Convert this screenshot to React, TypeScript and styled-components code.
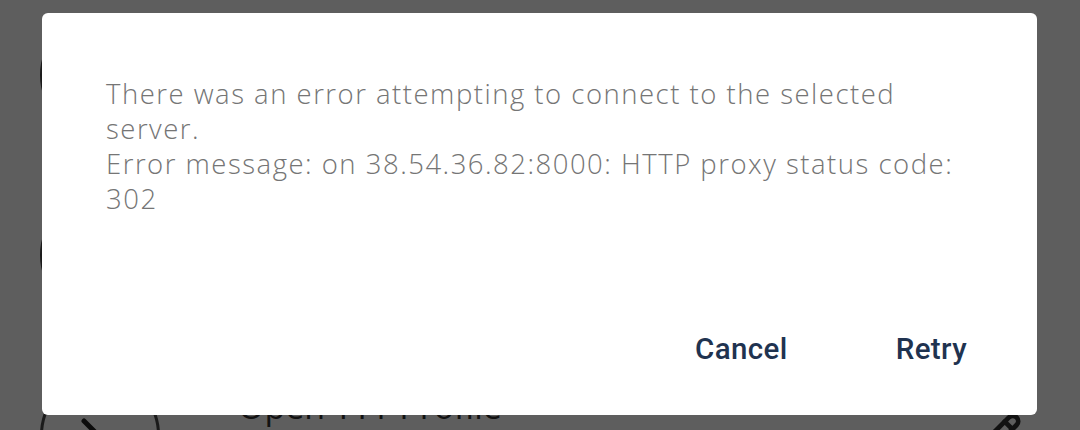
import React from "react";
import styled, { createGlobalStyle } from "styled-components";
import { Pencil, Terminal } from "lucide-react";

const GlobalStyle = createGlobalStyle`
  html, body {
    margin: 0;
    padding: 0;
    width: 100%;
    height: 100%;
    overflow: hidden;
    background: #ffffff;
  }
  #root {
    height: 100%;
  }
`;

const profiles = [
  { name: "Local Shell", host: "localhost" },
  { name: "Remote Server", host: "38.54.36.82" },
  { name: "Open TTY Profile", host: "38.54.36.82:8000" },
];

const message =
  "There was an error attempting to connect to the selected server.\nError message: on 38.54.36.82:8000: HTTP proxy status code: 302";

export default function App() {
  return (
    <>
      <GlobalStyle />
      <List>
        {profiles.map((p) => (
          <Row key={p.name}>
            <Avatar>
              <Terminal size={48} strokeWidth={2.5} />
            </Avatar>
            <Info>
              <Name>{p.name}</Name>
              <Host>{p.host}</Host>
            </Info>
            <EditIcon>
              <Pencil size={46} strokeWidth={2.5} />
            </EditIcon>
          </Row>
        ))}
      </List>
      <Scrim />
      <Dialog role="alertdialog">
        <Message>{message}</Message>
        <Actions>
          <ActionButton>Cancel</ActionButton>
          <ActionButton>Retry</ActionButton>
        </Actions>
      </Dialog>
    </>
  );
}

const List = styled.div`
  display: flex;
  flex-direction: column;
  margin-top: -15px;
`;

const Row = styled.div`
  height: 180px;
  display: flex;
  align-items: center;
  padding: 0 58px 0 40px;
  gap: 78px;
  font-family: "Open Sans", "Liberation Sans", sans-serif;
`;

const Avatar = styled.div`
  width: 120px;
  height: 120px;
  border-radius: 50%;
  border: 3px solid #4a4a4a;
  box-sizing: border-box;
  display: flex;
  align-items: center;
  justify-content: center;
  color: #222;
  flex-shrink: 0;
`;

const Info = styled.div`
  flex: 1;
  display: flex;
  flex-direction: column;
  gap: 4px;
  margin-bottom: 24px;
`;

const Name = styled.div`
  font-size: 34px;
  line-height: 40px;
  color: #333;
`;

const Host = styled.div`
  font-size: 24px;
  line-height: 30px;
  color: #777;
`;

const EditIcon = styled.div`
  color: #333;
  display: flex;
`;

const Scrim = styled.div`
  position: fixed;
  inset: 0;
  background: rgba(0, 0, 0, 0.63);
`;

const Dialog = styled.div`
  position: fixed;
  top: 13px;
  left: 42px;
  width: 995px;
  height: 402px;
  box-sizing: border-box;
  background: #ffffff;
  border-radius: 6px;
  padding: 63px 64px 30px 64px;
  display: flex;
  flex-direction: column;
  justify-content: space-between;
`;

const Message = styled.div`
  font-family: "Open Sans", Lato, sans-serif;
  font-weight: 300;
  font-size: 27.5px;
  line-height: 35px;
  letter-spacing: 1.5px;
  color: #757575;
  white-space: pre-line;
`;

const Actions = styled.div`
  display: flex;
  justify-content: flex-end;
  gap: 60px;
  margin-right: -18px;
  margin-bottom: 7px;
`;

const ActionButton = styled.button`
  border: none;
  background: transparent;
  padding: 12px 24px;
  font-family: Roboto, "Liberation Sans", sans-serif;
  font-weight: 500;
  font-size: 29.5px;
  letter-spacing: 0.4px;
  color: #1f3350;
  cursor: pointer;
`;
